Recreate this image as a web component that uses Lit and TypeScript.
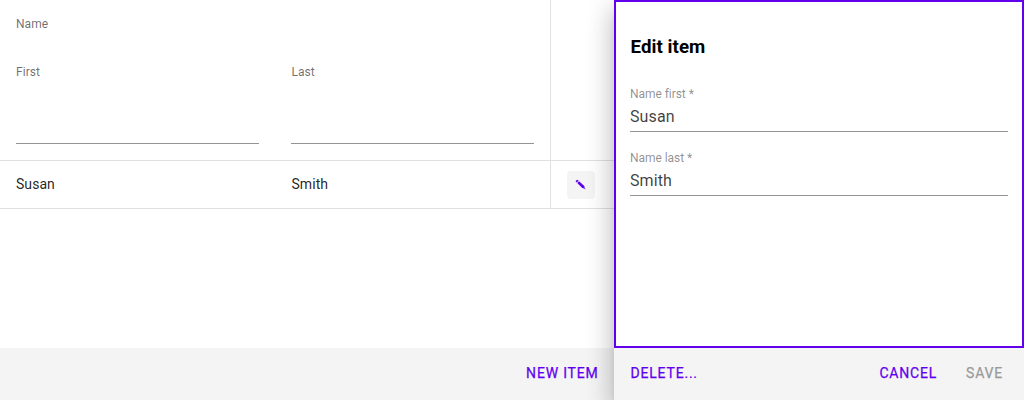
import { LitElement, html, css } from "lit";
import { customElement, property } from "lit/decorators.js";

@customElement("text-field")
class TextField extends LitElement {
  @property() label = "";
  @property() value = "";

  static styles = css`
    :host { display: block; box-sizing: border-box; height: 48px; border-bottom: 1px solid #949494; }
    .label { font-size: 12px; line-height: 14px; padding-top: 3px; color: rgba(0, 0, 0, 0.45); letter-spacing: -0.05px; }
    .value { font-size: 16px; line-height: 28px; padding-top: 2px; color: rgba(0, 0, 0, 0.76); letter-spacing: 0.1px; }
  `;

  render() {
    return html`<div class="label">${this.label}</div><div class="value">${this.value}</div>`;
  }
}

@customElement("app-root")
class AppRoot extends LitElement {
  static styles = css`
    :host { display: block; height: 400px; overflow: hidden; background: #fff; font-family: Roboto, sans-serif; }
    .page { display: grid; grid-template-columns: 614px 410px; height: 400px; }
    .main, .drawer { display: grid; grid-template-rows: 348px 52px; }
    .table { display: grid; grid-template-columns: 275px 275px 1fr; grid-template-rows: 161px 48px; }
    .cell { box-sizing: border-box; padding: 0 16px; border-bottom: 1px solid #e0e0e0; }
    .actions { border-left: 1px solid #e0e0e0; }
    .head { font-size: 12px; line-height: 48px; letter-spacing: 0.05px; color: rgba(0, 0, 0, 0.58); padding-bottom: 16px; }
    .group { height: 48px; }
    .filter { height: 48px; border-bottom: 1px solid #949494; }
    .head .column { height: 47px; }
    .last { text-indent: 0.5px; }
    .body { font-size: 14px; line-height: 47px; letter-spacing: 0.05px; color: rgba(0, 0, 0, 0.87); }
    .edit { display: flex; align-items: center; justify-content: center; width: 28px; height: 28px; margin-top: 10px; border-radius: 4px; background: #f4f4f4; }
    .footer { display: flex; align-items: center; padding: 0 16px; background: #f4f4f4; }
    .main .footer { justify-content: flex-end; }
    .button { font-size: 14px; font-weight: 400; line-height: 20px; letter-spacing: 0.8px; color: #6200ee; -webkit-text-stroke: 0.25px currentColor; padding-bottom: 2px; }
    .main .button { margin-right: -0.5px; }
    .delete { text-indent: 0.5px; }
    .cancel { margin-left: auto; }
    .save { margin-left: 29px; margin-right: 5px; color: #9a9a9a; }
    .drawer { position: relative; box-shadow: 0 8px 10px -5px rgba(0, 0, 0, 0.2), 0 16px 24px 2px rgba(0, 0, 0, 0.14), 0 6px 26px 4px rgba(0, 0, 0, 0.11); }
    .form { box-sizing: border-box; border: 2px solid #6200ee; padding: 34px 14px 0; background: #fff; }
    .title { margin: 0; font-size: 18.72px; line-height: 22px; font-weight: 700; color: #000; letter-spacing: 0.05px; text-indent: 0.5px; }
    text-field { margin-top: 16px; }
    .title + text-field { margin-top: 26px; }
  `;

  render() {
    return html`
      <div class="page">
        <div class="main">
          <div class="table">
            <div class="cell head">
              <div class="group">Name</div>
              <div class="column">First</div>
              <div class="filter"></div>
            </div>
            <div class="cell head last">
              <div class="group"></div>
              <div class="column">Last</div>
              <div class="filter"></div>
            </div>
            <div class="cell actions"></div>
            <div class="cell body">Susan</div>
            <div class="cell body last">Smith</div>
            <div class="cell actions">
              <div class="edit">
                <svg width="12" height="12" viewBox="0 0 12 12" fill="#6200ee">
                  <path d="M.7 2 1.8.9Q2.6.5 3.3 1.3L3.5 1.7 1.7 3.5 1.2 3.1Q.5 2.5.7 2Z" />
                  <path d="M2.2 4.1 4.1 2.2 9.3 7.1 9.7 9.1 10.9 10.7 9.1 9.6 7.2 9.1Z" />
                </svg>
              </div>
            </div>
          </div>
          <div class="footer"><span class="button">NEW ITEM</span></div>
        </div>
        <div class="drawer">
          <div class="form">
            <h2 class="title">Edit item</h2>
            <text-field label="Name first *" value="Susan"></text-field>
            <text-field label="Name last *" value="Smith"></text-field>
          </div>
          <div class="footer">
            <span class="button delete">DELETE...</span>
            <span class="button cancel">CANCEL</span>
            <span class="button save">SAVE</span>
          </div>
        </div>
      </div>
    `;
  }
}
